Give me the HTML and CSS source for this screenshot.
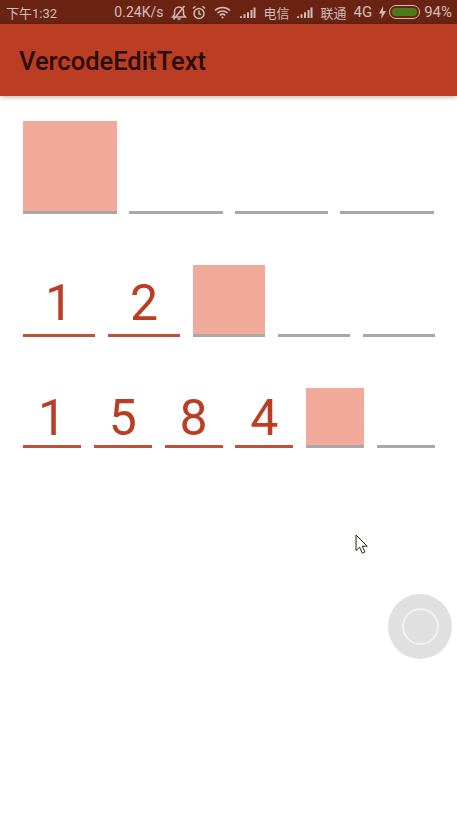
FILE: index.html
```html
<!DOCTYPE html>
<html lang="zh-CN">
<head>
    <meta charset="UTF-8">
    <meta name="viewport" content="width=device-width, initial-scale=1.0">
    <title>VercodeEditText</title>
    <link rel="stylesheet" href="styles.css">
</head>
<body>
    <div class="status-bar">
        <span class="time">下午1:32</span>
        <div class="status-right">
            <span class="speed">0.24K/s</span>
            <svg class="ico mute" width="16" height="15" viewBox="0 0 16 15" fill="none" stroke="#d0bcb5" stroke-width="1.5">
                <path d="M1.500 12h13l-2-2.500V6.500a4.500 4.500 0 0 0-9 0v3z"/>
                <path d="M6.500 14h3"/>
                <path d="M2.500 14.500 13.500 1"/>
            </svg>
            <svg class="ico alarm" width="14" height="15" viewBox="0 0 14 15" fill="none" stroke="#d0bcb5" stroke-width="1.500">
                <circle cx="7" cy="8.500" r="5"/>
                <path d="M7 5.500v3.200l2 1M1 3.500l2.500-2.300M13 3.500l-2.500-2.300"/>
            </svg>
            <svg class="ico wifi" width="17" height="13" viewBox="0 0 17 13" fill="none" stroke="#d0bcb5" stroke-width="1.600">
                <path d="M1 4.500a11 11 0 0 1 15 0M3.400 7a7.500 7.500 0 0 1 10.200 0M5.800 9.400a4 4 0 0 1 5.400 0"/>
                <circle cx="8.500" cy="11.500" r="1" fill="#d0bcb5" stroke="none"/>
            </svg>
            <svg class="ico signal" width="17" height="11" viewBox="0 0 17 11" fill="#d0bcb5">
                <path d="M1 11V9.300h2V11zM4.500 11V7.300h2V11zM8 11V5.300h2V11zM11.500 11V3h2v8zM14.500 11V.5h2V11z"/>
            </svg>
            <span class="cn">电信</span>
            <svg class="ico signal" width="17" height="11" viewBox="0 0 17 11" fill="#d0bcb5">
                <path d="M1 11V9.300h2V11zM4.500 11V7.300h2V11zM8 11V5.300h2V11zM11.500 11V3h2v8zM14.500 11V.5h2V11z"/>
            </svg>
            <span class="cn">联通</span>
            <span class="net">4G</span>
            <svg class="ico bolt" width="7" height="13" viewBox="0 0 7 13" fill="#d0bcb5">
                <path d="M4.200 0 0 7.500h2.800L2.200 13 7 5H4z"/>
            </svg>
            <div class="battery"><div class="battery-fill"></div></div>
            <span class="pct">94%</span>
        </div>
    </div>

    <header class="toolbar">VercodeEditText</header>

    <main class="content">
        <div class="code-row row-four">
            <div class="cell active"></div>
            <div class="cell"></div>
            <div class="cell"></div>
            <div class="cell"></div>
        </div>
        <div class="code-row row-five">
            <div class="cell filled">1</div>
            <div class="cell filled">2</div>
            <div class="cell active"></div>
            <div class="cell"></div>
            <div class="cell"></div>
        </div>
        <div class="code-row row-six">
            <div class="cell filled">1</div>
            <div class="cell filled">5</div>
            <div class="cell filled">8</div>
            <div class="cell filled">4</div>
            <div class="cell active"></div>
            <div class="cell"></div>
        </div>
    </main>

    <svg class="pointer" width="14" height="21" viewBox="0 0 14 21">
        <path d="M1 1v15.500l3.600-3.300 2.700 6 2.600-1.200-2.600-5.800h4.900z" fill="#fff" stroke="#2c2414" stroke-width="1"/>
    </svg>

    <div class="float-ball"><div class="float-ring"></div></div>
</body>
</html>
```

FILE: styles.css
```css
* {
    box-sizing: border-box;
}
html, body {
    margin: 0;
    padding: 0;
}
body {
    position: relative;
    height: 817px;
    overflow: hidden;
    background-color: #fff;
    font-family: Roboto, "Noto Sans CJK SC", sans-serif;
}
.status-bar {
    height: 24px;
    padding: 0 5px 0 6px;
    display: flex;
    align-items: center;
    justify-content: space-between;
    background-color: #6b2414;
    color: #d0bcb5;
    font-size: 14px;
}
.time {
    font-size: 13px;
}
.status-right {
    display: flex;
    align-items: center;
}
.speed {
    margin-right: 8px;
}
.ico {
    display: block;
    flex: none;
}
.mute {
    margin-right: 5px;
}
.alarm {
    margin-right: 8px;
}
.wifi {
    margin-right: 8px;
}
.signal {
    margin-right: 7px;
}
.cn {
    font-size: 13px;
    margin-right: 7px;
}
.net {
    font-size: 15px;
    margin-right: 7px;
}
.bolt {
    margin-right: 3px;
}
.battery {
    width: 31px;
    height: 14px;
    padding: 2px;
    margin-right: 4px;
    border: 1px solid #d0bcb5;
    border-radius: 7px;
}
.battery-fill {
    height: 100%;
    border-radius: 4px;
    background-color: #4c7a1c;
}
.pct {
    font-size: 15px;
}
.toolbar {
    height: 72px;
    padding: 2px 0 0 19px;
    display: flex;
    align-items: center;
    background-color: #bb3e24;
    color: #2a0d06;
    font-size: 25.500px;
    font-weight: 500;
    box-shadow: 0 1px 5px rgba(0, 0, 0, 0.3);
}
.content {
    padding: 25px 22px 0 23px;
    display: flex;
    flex-direction: column;
}
.code-row {
    display: flex;
    align-items: flex-end;
}
.row-four {
    height: 93px;
    padding-right: 1px;
    gap: 12px;
}
.row-five {
    height: 72px;
    margin-top: 51px;
    gap: 13px;
}
.row-six {
    height: 60px;
    margin-top: 51px;
    gap: 12.800px;
}
.cell {
    flex: 1;
    height: 100%;
    display: flex;
    align-items: center;
    justify-content: center;
    border-bottom: 3px solid #a8a8a8;
    color: #bb3e24;
    font-size: 50px;
}
.active {
    background-color: #f2aa9b;
}
.filled {
    border-bottom-color: #bf5039;
}
.row-five .filled {
    padding-top: 7px;
}
.row-six .filled {
    padding-top: 2px;
}
.pointer {
    position: absolute;
    left: 355px;
    top: 534px;
}
.float-ball {
    position: absolute;
    left: 388px;
    top: 594px;
    width: 64px;
    height: 65px;
    display: flex;
    align-items: center;
    justify-content: center;
    border-radius: 50%;
    background-color: #e0e0e0;
}
.float-ring {
    width: 37px;
    height: 37px;
    border: 2px solid #f2f2f2;
    border-radius: 50%;
}
```
